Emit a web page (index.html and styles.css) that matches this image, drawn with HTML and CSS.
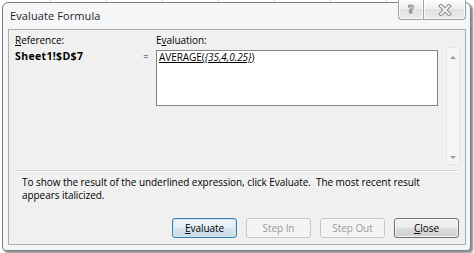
FILE: index.html
```html
<!DOCTYPE html>
<html>
<head>
<meta charset="utf-8">
<link rel="stylesheet" href="styles.css">
</head>
<body>
<div class="window">
  <div class="titlebar">
    <span class="title">Evaluate Formula</span>
    <div class="caption">
      <span class="cbtn help">?</span>
      <span class="cbtn closex">
        <svg width="14" height="12" viewBox="0 0 14 12">
          <path d="M3 2 L11 10 M11 2 L3 10" stroke="#8a8a8a" stroke-width="4" stroke-linecap="square" fill="none"/>
          <path d="M3 2 L11 10 M11 2 L3 10" stroke="#f4f4f4" stroke-width="2" stroke-linecap="square" fill="none"/>
        </svg>
      </span>
    </div>
  </div>
  <div class="client">
    <div class="top">
      <div class="lbl ref"><u>R</u>eference:</div>
      <div class="lbl evl">E<u>v</u>aluation:</div>
      <div class="refval">Sheet1!$D$7</div>
      <div class="eq">=</div>
      <div class="box"><span class="expr">AVERAGE(<i>{35,4,0.25}</i>)</span></div>
      <div class="vscroll"><span class="arrow up"></span><span class="arrow down"></span></div>
    </div>
    <div class="sep"></div>
    <p class="desc">To show the result of the underlined expression, click Evaluate.&nbsp; The most recent result<br>appears italicized.</p>
    <div class="buttons">
      <span class="btn default"><u>E</u>valuate</span>
      <span class="btn disabled">Step In</span>
      <span class="btn disabled">Step Out</span>
      <span class="btn"><u>C</u>lose</span>
    </div>
  </div>
</div>
</body>
</html>
```
FILE: styles.css
```css
html, body {
  margin: 0;
  padding: 0;
}
body {
  width: 474px;
  height: 253px;
  overflow: hidden;
  background: #ffffff;
  background-image: repeating-linear-gradient(90deg, transparent 0, transparent 50px, #d4d4d4 50px, #d4d4d4 51px, transparent 51px, transparent 56px);
  font-family: "Open Sans", "Noto Sans", sans-serif;
  font-size: 10px;
  letter-spacing: -0.06px;
  color: #000;
}
.window {
  box-sizing: border-box;
  margin: 2px 0 0 2px;
  width: 469px;
  height: 249px;
  border: 1px solid #7c7f84;
  border-radius: 6px 6px 4px 4px;
  background: #f5f6f7;
  box-shadow: 2px 2px 2px rgba(0,0,0,0.45);
  display: flex;
  flex-direction: column;
}
.titlebar {
  height: 26px;
  display: flex;
  align-items: flex-start;
  flex: none;
}
.title {
  padding-left: 7px;
  line-height: 26px;
  font-size: 11px;
  letter-spacing: 0.1px;
  color: #1e1e1e;
}
.caption {
  margin-left: auto;
  margin-right: 4px;
  margin-top: -3px;
  display: flex;
}
.cbtn {
  box-sizing: border-box;
  height: 20px;
  display: flex;
  align-items: center;
  justify-content: center;
  border: 1px solid #9ea2a7;
  border-top: none;
  background: linear-gradient(#fbfbfb, #eeeeee 50%, #e2e2e2 50%, #eaeaea);
  box-shadow: inset 0 0 0 1px rgba(255,255,255,0.8);
}
.help {
  width: 25px;
  border-radius: 0 0 0 4px;
  border-right: none;
  font-family: "DejaVu Sans", sans-serif;
  font-weight: bold;
  font-size: 11px;
  color: #ffffff;
  -webkit-text-stroke: 1px #8a8a8a;
  letter-spacing: 0;
}
.closex {
  width: 43px;
  border-radius: 0 0 4px 0;
}
.client {
  flex: 1;
  margin: 0 4px 5px 5px;
  border: 1px solid #a9adb2;
  background: #f0f0f0;
  display: flex;
  flex-direction: column;
}
.top {
  display: grid;
  grid-template-columns: 128px 13px 282px 8px 14px;
  grid-template-rows: 16px 56px 60px;
  padding: 4px 0 0 6px;
}
.lbl {
  line-height: 13px;
  grid-row: 1;
}
.ref { grid-column: 1; }
.evl { grid-column: 3; }
.refval {
  grid-row: 2;
  grid-column: 1;
  font-weight: bold;
  font-size: 10.5px;
  letter-spacing: 0.35px;
  line-height: 13px;
}
.eq {
  grid-row: 2;
  grid-column: 2;
  line-height: 13px;
  color: #333;
}
.box {
  grid-row: 2;
  grid-column: 3;
  box-sizing: border-box;
  border: 1px solid #7f8388;
  background: #ffffff;
  padding: 0 2px;
  line-height: 13px;
}
.expr {
  text-decoration: underline;
}
.vscroll {
  grid-row: 1 / 4;
  grid-column: 5;
  margin-top: 13px;
  height: 118px;
  box-sizing: border-box;
  border: 1px solid #e6e6e6;
  background: #f5f5f5;
  display: flex;
  flex-direction: column;
  justify-content: space-between;
  align-items: center;
  padding: 8px 0 5px;
}
.arrow {
  width: 0;
  height: 0;
  border-left: 3px solid transparent;
  border-right: 3px solid transparent;
}
.up { border-bottom: 3px solid #9a9a9a; }
.down { border-top: 3px solid #9a9a9a; }
.sep {
  margin: 4px 0 0 5px;
  width: 445px;
  border-top: 1px solid #d8d8d8;
  border-bottom: 1px solid #ffffff;
}
.desc {
  margin: 4px 0 0 13px;
  line-height: 13px;
}
.buttons {
  margin-top: 16px;
  display: flex;
  justify-content: flex-end;
  gap: 9px;
  padding-right: 6px;
}
.btn {
  box-sizing: border-box;
  width: 65px;
  height: 20px;
  display: flex;
  align-items: center;
  justify-content: center;
  border: 1px solid #707070;
  border-radius: 3px;
  background: linear-gradient(#f2f2f2, #ebebeb 50%, #dddddd 50%, #cfcfcf);
  box-shadow: inset 0 0 0 1px rgba(255,255,255,0.75);
}
.btn.default {
  border-color: #3c7fb1;
  background: linear-gradient(#eef5fa, #e4edf3 50%, #d7e4ee 50%, #ccdbe6);
  box-shadow: inset 0 0 0 1px #c4e6f8;
}
.btn.disabled {
  border-color: #c3c6c9;
  background: #f4f4f4;
  box-shadow: none;
  color: #9a9a9a;
}
```
